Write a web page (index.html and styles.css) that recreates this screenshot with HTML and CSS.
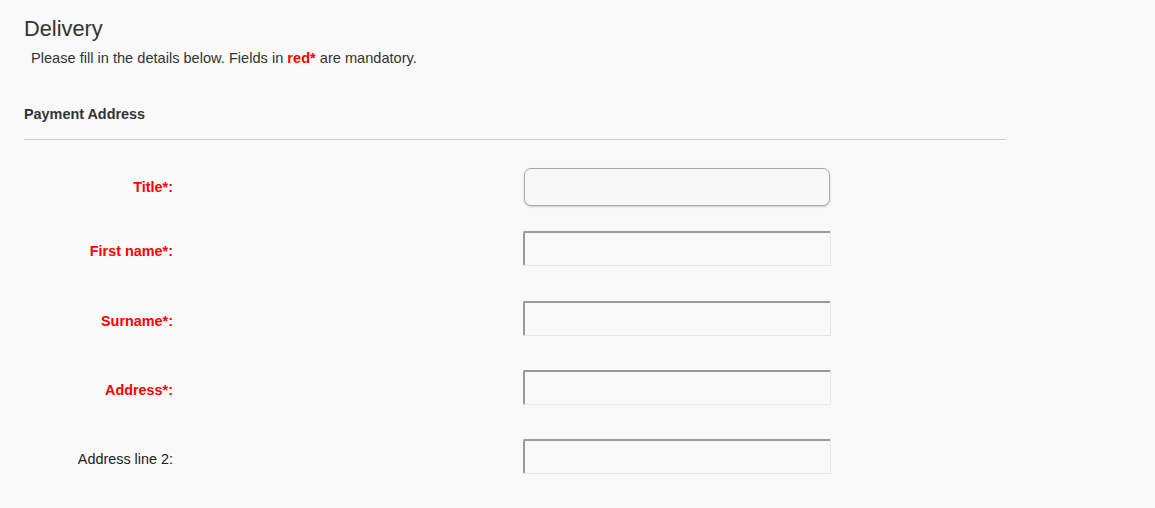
FILE: index.html
```html
<!DOCTYPE html>
<html lang="en">
<head>
<meta charset="utf-8">
<title>Delivery</title>
<link rel="stylesheet" href="styles.css">
</head>
<body>
<div class="page">
  <h1 class="title">Delivery</h1>
  <p class="intro">Please fill in the details below. Fields in <span class="req">red*</span> are mandatory.</p>
  <h2 class="section">Payment Address</h2>
  <hr class="rule">
  <form class="form">
    <div class="row row-select">
      <label class="label label-req">Title*:</label>
      <div class="select"></div>
    </div>
    <div class="row">
      <label class="label label-req">First name*:</label>
      <input class="input" type="text">
    </div>
    <div class="row row-wide">
      <label class="label label-req">Surname*:</label>
      <input class="input" type="text">
    </div>
    <div class="row">
      <label class="label label-req">Address*:</label>
      <input class="input" type="text">
    </div>
    <div class="row">
      <label class="label">Address line 2:</label>
      <input class="input" type="text">
    </div>
  </form>
</div>
</body>
</html>
```
FILE: styles.css
```css
html, body {
  margin: 0;
  padding: 0;
  background: #f9f9f9;
}
body {
  font-family: "Liberation Sans", Arial, sans-serif;
  color: #333;
  font-size: 14.4px;
}
.page {
  padding: 16px 0 0 24px;
}
.title {
  margin: 0;
  font-size: 21.8px;
  font-weight: normal;
  line-height: 25px;
  color: #333;
}
.intro {
  margin: 9px 0 0 7px;
  font-size: 14.6px;
  line-height: 16px;
  color: #333;
}
.req {
  color: #ff0000;
  font-weight: bold;
}
.section {
  margin: 40px 0 0 0;
  font-size: 14.4px;
  font-weight: bold;
  line-height: 16px;
  color: #333;
}
.rule {
  margin: 17px 0 0 0;
  width: 982px;
  border: 0;
  height: 1px;
  background: #cccccc;
}
.form {
  display: flex;
  flex-direction: column;
  margin-top: 28px;
}
.row {
  display: flex;
  align-items: center;
  margin-top: 34px;
}
.row-select {
  margin-top: 0;
}
.row-select + .row {
  margin-top: 25px;
}
.row-wide {
  margin-top: 35px;
}
.label {
  width: 149px;
  text-align: right;
  line-height: 16px;
  padding-top: 5px;
  color: #222;
}
.row-select .label {
  padding-top: 0;
}
.label-req {
  color: #ff0000;
  font-weight: bold;
}
.select {
  margin-left: 351px;
  width: 304px;
  height: 36px;
  border: 1px solid #a8a8a8;
  border-radius: 7px;
  background: #f8f8f8;
  box-shadow: 0 1px 2px rgba(0, 0, 0, 0.18);
}
.input {
  margin: 0 0 0 350px;
  width: 308px;
  height: 35px;
  box-sizing: border-box;
  padding: 0;
  background: #f9f9f9;
  border-style: solid;
  border-width: 2px 1px 1px 2px;
  border-color: #999 #e6e6e6 #e6e6e6 #999;
  border-radius: 2px;
  outline: none;
}
```
